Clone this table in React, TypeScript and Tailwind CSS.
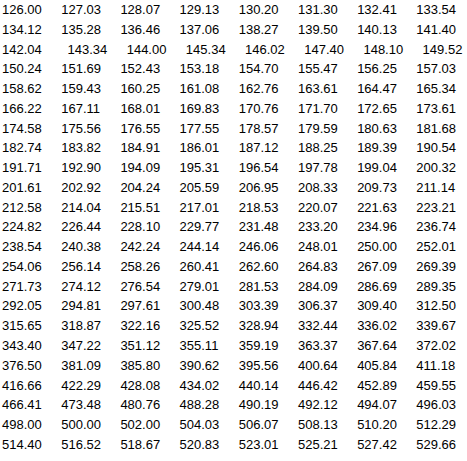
const rows: string[][] = [
  ["126.00", "127.03", "128.07", "129.13", "130.20", "131.30", "132.41", "133.54"],
  ["134.12", "135.28", "136.46", "137.06", "138.27", "139.50", "140.13", "141.40"],
  ["142.04", "143.34", "144.00", "145.34", "146.02", "147.40", "148.10", "149.52"],
  ["150.24", "151.69", "152.43", "153.18", "154.70", "155.47", "156.25", "157.03"],
  ["158.62", "159.43", "160.25", "161.08", "162.76", "163.61", "164.47", "165.34"],
  ["166.22", "167.11", "168.01", "169.83", "170.76", "171.70", "172.65", "173.61"],
  ["174.58", "175.56", "176.55", "177.55", "178.57", "179.59", "180.63", "181.68"],
  ["182.74", "183.82", "184.91", "186.01", "187.12", "188.25", "189.39", "190.54"],
  ["191.71", "192.90", "194.09", "195.31", "196.54", "197.78", "199.04", "200.32"],
  ["201.61", "202.92", "204.24", "205.59", "206.95", "208.33", "209.73", "211.14"],
  ["212.58", "214.04", "215.51", "217.01", "218.53", "220.07", "221.63", "223.21"],
  ["224.82", "226.44", "228.10", "229.77", "231.48", "233.20", "234.96", "236.74"],
  ["238.54", "240.38", "242.24", "244.14", "246.06", "248.01", "250.00", "252.01"],
  ["254.06", "256.14", "258.26", "260.41", "262.60", "264.83", "267.09", "269.39"],
  ["271.73", "274.12", "276.54", "279.01", "281.53", "284.09", "286.69", "289.35"],
  ["292.05", "294.81", "297.61", "300.48", "303.39", "306.37", "309.40", "312.50"],
  ["315.65", "318.87", "322.16", "325.52", "328.94", "332.44", "336.02", "339.67"],
  ["343.40", "347.22", "351.12", "355.11", "359.19", "363.37", "367.64", "372.02"],
  ["376.50", "381.09", "385.80", "390.62", "395.56", "400.64", "405.84", "411.18"],
  ["416.66", "422.29", "428.08", "434.02", "440.14", "446.42", "452.89", "459.55"],
  ["466.41", "473.48", "480.76", "488.28", "490.19", "492.12", "494.07", "496.03"],
  ["498.00", "500.00", "502.00", "504.03", "506.07", "508.13", "510.20", "512.29"],
  ["514.40", "516.52", "518.67", "520.83", "523.01", "525.21", "527.42", "529.66"],
];

export default function App() {
  return (
    <div className="w-[467px] h-[461px] bg-white overflow-hidden pl-[2px] text-black text-[13px] leading-[19.77px] font-['Liberation_Sans',Arial,sans-serif]">
      {rows.map((row, r) => (
        <div key={r} className="grid grid-cols-[repeat(8,59.2px)] h-[19.77px]">
          {row.map((v, c) => (
            <div
              key={c}
              className={r === 2 && c > 0 ? "pl-[6.3px] whitespace-nowrap" : "whitespace-nowrap"}
            >
              {v}
            </div>
          ))}
        </div>
      ))}
    </div>
  );
}
